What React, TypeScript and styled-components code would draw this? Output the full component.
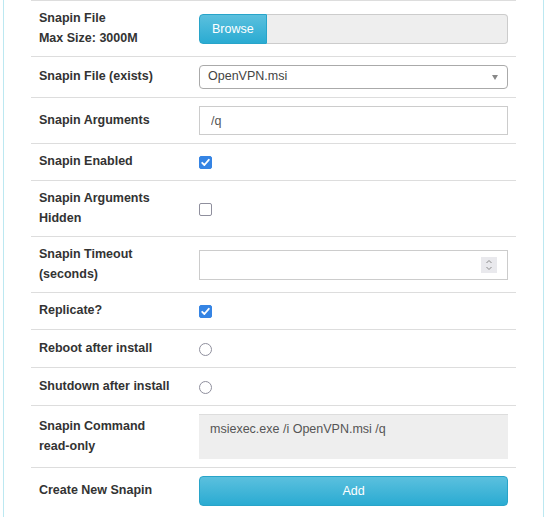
import React from "react";
import styled, { createGlobalStyle } from "styled-components";

const GlobalStyle = createGlobalStyle`
  body {
    margin: 0;
    background: #fff;
    font-family: "Liberation Sans", Arial, sans-serif;
    font-size: 12.5px;
    color: #333;
  }
  * {
    box-sizing: border-box;
  }
`;

// Panel (top edge scrolled out of view)
const Panel = styled.div`
  margin-left: 3px;
  width: 541px;
  padding-bottom: 16px;
  border-left: 1px solid #bce8f1;
  border-right: 1px solid #bce8f1;
`;

const Table = styled.table`
  width: 90%;
  margin: 0 auto;
  border-collapse: separate;
  border-spacing: 0;
`;

const Cell = styled.td<{ $label?: boolean }>`
  padding: 8px;
  border-top: 1px solid #ddd;
  vertical-align: middle;
  line-height: 19.5px;
  width: ${(p) => (p.$label ? "33%" : "auto")};
  font-weight: ${(p) => (p.$label ? "bold" : "normal")};
  color: #333;
`;

const FileGroup = styled.div`
  display: flex;
  height: 30px;
`;

const BlueButton = styled.button<{ $block?: boolean }>`
  display: block;
  height: ${(p) => (p.$block ? "29.5px" : "30px")};
  width: ${(p) => (p.$block ? "100%" : "auto")};
  padding: 0 12px;
  font-family: inherit;
  font-size: 12.5px;
  color: #fff;
  background: linear-gradient(to bottom, #5bc0de 0%, #2aabd2 100%);
  border: 1px solid #28a4c9;
  border-radius: ${(p) => (p.$block ? "4px" : "4px 0 0 4px")};
  cursor: pointer;
`;

const FileName = styled.div`
  flex: 1;
  background: #eee;
  border: 1px solid #ccc;
  border-left: none;
  border-radius: 0 4px 4px 0;
`;

const Select = styled.div`
  display: flex;
  align-items: center;
  justify-content: space-between;
  height: 24px;
  padding: 0 9px 0 8px;
  border: 1px solid #aaa;
  border-radius: 4px;
  color: #444;
  background: #fff;

  &::after {
    content: "";
    border-top: 5px solid #888;
    border-left: 3.5px solid transparent;
    border-right: 3.5px solid transparent;
  }
`;

const TextInput = styled.input`
  display: block;
  width: 100%;
  height: 29px;
  padding: 0 11px;
  font-family: inherit;
  font-size: 12.5px;
  color: #555;
  border: 1px solid #ccc;
  border-radius: 0;
  outline: none;
  appearance: textfield;

  &::-webkit-inner-spin-button,
  &::-webkit-outer-spin-button {
    -webkit-appearance: none;
    margin: 0;
  }
`;

const NumberWrap = styled.div`
  position: relative;

  ${TextInput} {
    height: 30px;
  }
`;

const Spinner = styled.span`
  position: absolute;
  right: 11px;
  top: 7px;
  width: 16px;
  height: 16px;
  background: #e9e9ed;
  display: flex;
`;

const ReadOnlyArea = styled.textarea`
  display: block;
  width: 100%;
  height: 45px;
  padding: 5px 11px;
  font-family: inherit;
  font-size: 12.5px;
  line-height: 19.5px;
  color: #555;
  background: #eee;
  border: none;
  border-top: 1px solid #ddd;
  resize: none;
  outline: none;
`;

const Check = styled.span<{ $checked?: boolean; $round?: boolean }>`
  display: flex;
  align-items: center;
  justify-content: center;
  width: 13px;
  height: 13px;
  margin: ${(p) => (p.$round ? "4.5px 0 3.5px" : "4px 0 3px")};
  border: 1px solid ${(p) => (p.$checked ? "#3584e4" : "#8f8f9d")};
  border-radius: ${(p) => (p.$round ? "50%" : "2px")};
  background: ${(p) => (p.$checked ? "#3584e4" : "#fff")};
`;

const CheckBox: React.FC<{ checked?: boolean }> = ({ checked }) => (
  <Check $checked={checked}>
    {checked && (
      <svg width="11" height="11" viewBox="0 0 11 11">
        <path
          d="M2.2 5.8 L4.4 8 L8.8 2.8"
          fill="none"
          stroke="#fff"
          strokeWidth="1.8"
          strokeLinecap="round"
          strokeLinejoin="round"
        />
      </svg>
    )}
  </Check>
);

const Radio: React.FC = () => <Check $round />;

const App: React.FC = () => {
  return (
    <>
      <GlobalStyle />
      <Panel>
        <Table>
          <tbody>
            <tr>
              <Cell $label>
                Snapin File
                <br />
                Max Size: 3000M
              </Cell>
              <Cell>
                <FileGroup>
                  <BlueButton>Browse</BlueButton>
                  <FileName />
                </FileGroup>
              </Cell>
            </tr>
            <tr>
              <Cell $label>Snapin File (exists)</Cell>
              <Cell>
                <Select>OpenVPN.msi</Select>
              </Cell>
            </tr>
            <tr>
              <Cell $label>Snapin Arguments</Cell>
              <Cell>
                <TextInput type="text" defaultValue="/q" />
              </Cell>
            </tr>
            <tr>
              <Cell $label>Snapin Enabled</Cell>
              <Cell>
                <CheckBox checked />
              </Cell>
            </tr>
            <tr>
              <Cell $label>
                Snapin Arguments
                <br />
                Hidden
              </Cell>
              <Cell>
                <CheckBox />
              </Cell>
            </tr>
            <tr>
              <Cell $label>
                Snapin Timeout
                <br />
                (seconds)
              </Cell>
              <Cell>
                <NumberWrap>
                  <TextInput type="number" />
                  <Spinner>
                    <svg width="16" height="16" viewBox="0 0 16 16">
                      <path
                        d="M5.5 6 L8 3.5 L10.5 6 M5.5 10 L8 12.5 L10.5 10"
                        fill="none"
                        stroke="#8a8a8a"
                        strokeWidth="1"
                      />
                    </svg>
                  </Spinner>
                </NumberWrap>
              </Cell>
            </tr>
            <tr>
              <Cell $label>Replicate?</Cell>
              <Cell>
                <CheckBox checked />
              </Cell>
            </tr>
            <tr>
              <Cell $label>Reboot after install</Cell>
              <Cell>
                <Radio />
              </Cell>
            </tr>
            <tr>
              <Cell $label>Shutdown after install</Cell>
              <Cell>
                <Radio />
              </Cell>
            </tr>
            <tr>
              <Cell $label>
                Snapin Command
                <br />
                read-only
              </Cell>
              <Cell>
                <ReadOnlyArea readOnly value="msiexec.exe /i OpenVPN.msi /q" />
              </Cell>
            </tr>
            <tr>
              <Cell $label>Create New Snapin</Cell>
              <Cell>
                <BlueButton $block>Add</BlueButton>
              </Cell>
            </tr>
          </tbody>
        </Table>
      </Panel>
    </>
  );
};

export default App;
